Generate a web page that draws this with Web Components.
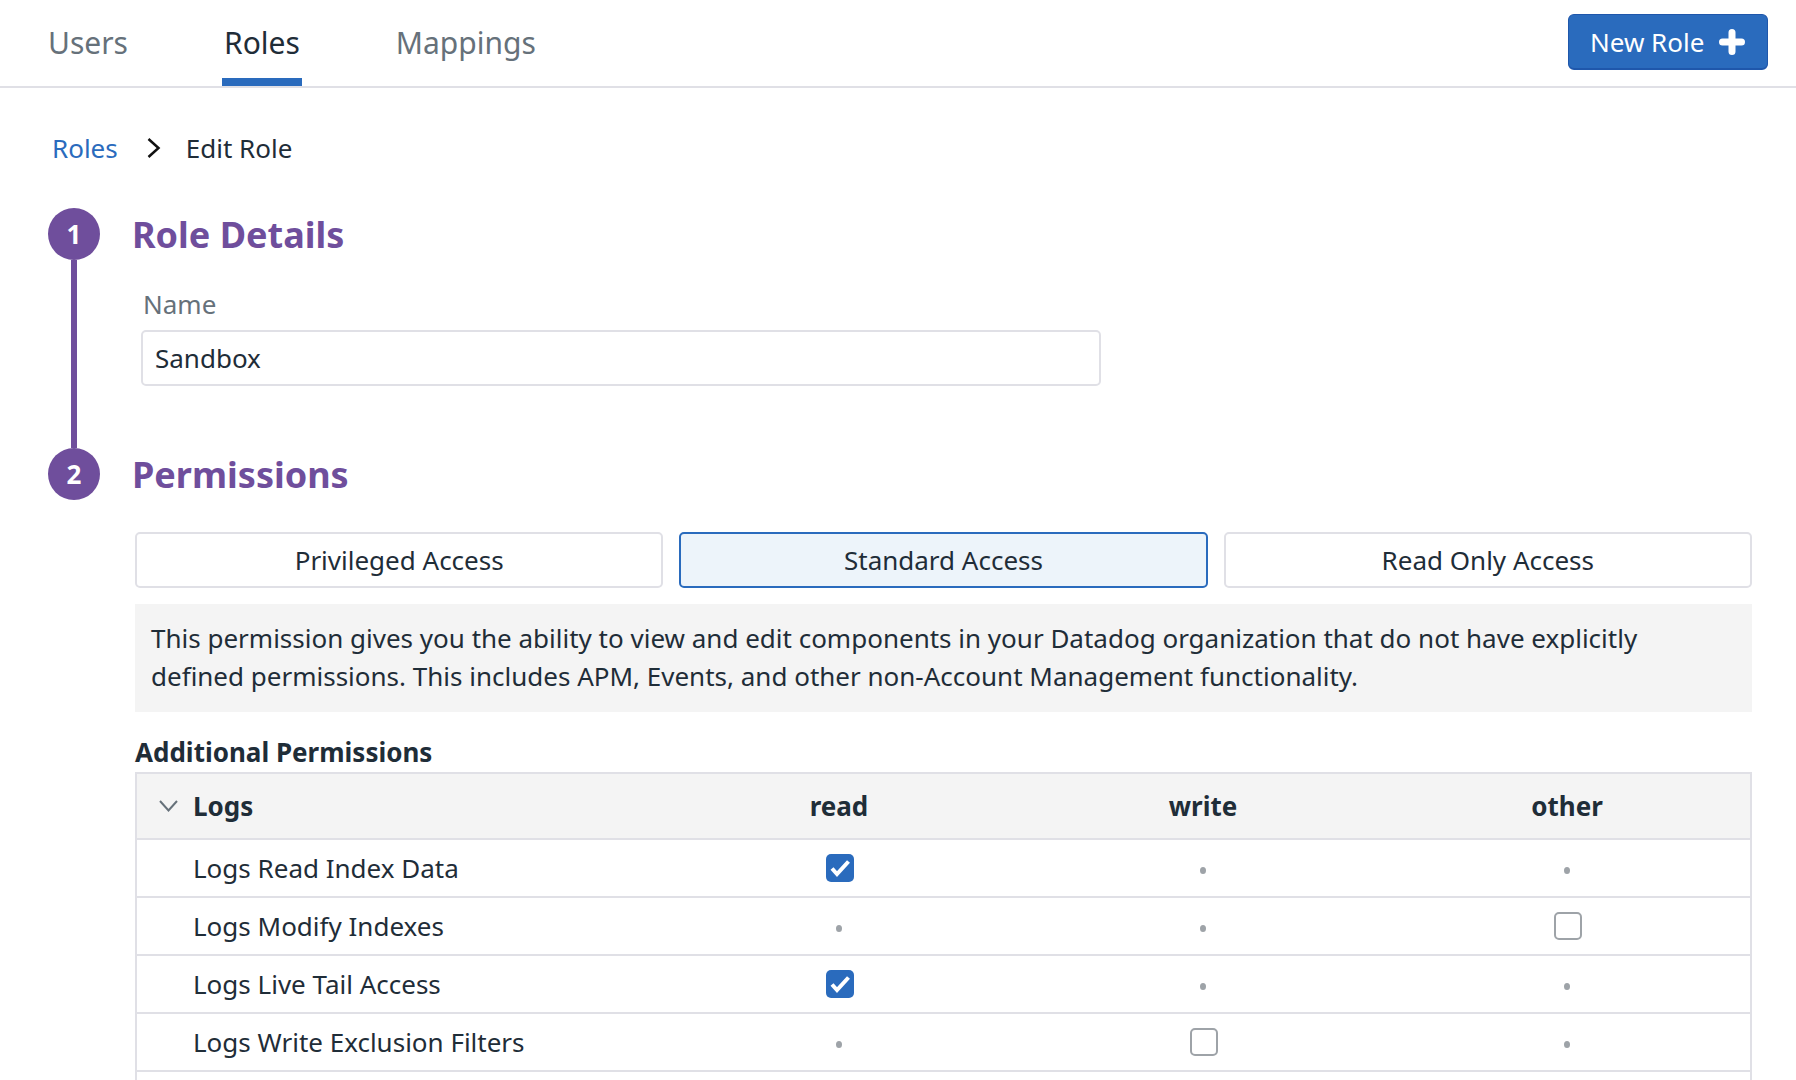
<!DOCTYPE html>
<html>
<head>
<meta charset="utf-8">
<title>Edit Role</title>
<style>
  html, body {
    margin: 0;
    height: 100%;
    overflow: hidden;
    background: #fff;
    font-family: "Noto Sans", sans-serif;
    color: #1f2d38;
  }
</style>
</head>
<body>
<role-tabs>
  <tab-item>Users</tab-item>
  <tab-item active>Roles</tab-item>
  <tab-item>Mappings</tab-item>
  <new-button slot="action">New Role</new-button>
</role-tabs>

<bread-crumb current="Edit Role">Roles</bread-crumb>

<role-step number="1" title="Role Details" line>
  <name-field label="Name" value="Sandbox"></name-field>
</role-step>

<role-step number="2" title="Permissions">
  <access-picker>
    <access-option>Privileged Access</access-option>
    <access-option selected>Standard Access</access-option>
    <access-option>Read Only Access</access-option>
  </access-picker>
  <info-box>This permission gives you the ability to view and edit components in your Datadog organization that do not have explicitly defined permissions. This includes APM, Events, and other non-Account Management functionality.</info-box>
  <perm-table title="Additional Permissions" group="Logs">
    <perm-row label="Logs Read Index Data" read="checked"></perm-row>
    <perm-row label="Logs Modify Indexes" other="empty"></perm-row>
    <perm-row label="Logs Live Tail Access" read="checked"></perm-row>
    <perm-row label="Logs Write Exclusion Filters" write="empty"></perm-row>
    <perm-row></perm-row>
  </perm-table>
</role-step>

<script>
class RoleTabs extends HTMLElement {
  constructor() {
    super();
    this.attachShadow({ mode: "open" }).innerHTML = `
      <style>
        :host {
          display: flex;
          justify-content: space-between;
          height: 88px;
          box-sizing: border-box;
          border-bottom: 2px solid #e0e0e6;
          padding: 0 28px 0 46px;
        }
        .tabs { display: flex; gap: 92px; }
        .action { display: flex; padding-top: 14px; }
      </style>
      <div class="tabs"><slot></slot></div>
      <div class="action"><slot name="action"></slot></div>`;
  }
}

class TabItem extends HTMLElement {
  constructor() {
    super();
    this.attachShadow({ mode: "open" }).innerHTML = `
      <style>
        :host {
          display: block;
          height: 86px;
          box-sizing: border-box;
          padding: 0 2px;
          font-size: 30px;
          line-height: 86px;
          color: #66717a;
          border-bottom: 8px solid transparent;
        }
        :host([active]) {
          color: #1f2d38;
          border-bottom-color: #2a6bbd;
        }
      </style>
      <slot></slot>`;
  }
}

class NewButton extends HTMLElement {
  constructor() {
    super();
    this.attachShadow({ mode: "open" }).innerHTML = `
      <style>
        :host {
          display: flex;
          align-items: center;
          justify-content: space-between;
          width: 200px;
          height: 56px;
          box-sizing: border-box;
          padding: 0 22px 0 21px;
          background: #2a6bbd;
          border: 1px solid #1f57ab;
          border-bottom-width: 2px;
          border-radius: 6px;
          color: #fff;
          font-size: 26px;
        }
        svg { width: 26px; height: 26px; }
      </style>
      <slot></slot>
      <svg viewBox="0 0 26 26"><path d="M13 3.500v19M3.500 13h19" stroke="#fff" stroke-width="7" stroke-linecap="round" fill="none"/></svg>`;
  }
}

class BreadCrumb extends HTMLElement {
  constructor() {
    super();
    this.attachShadow({ mode: "open" }).innerHTML = `
      <style>
        :host {
          display: flex;
          align-items: center;
          height: 120px;
          padding-left: 52px;
          font-size: 26px;
        }
        .link { color: #2a6bbd; }
        svg { width: 14px; height: 20px; margin: 0 25px 0 29px; }
      </style>
      <span class="link"><slot></slot></span>
      <svg viewBox="0 0 14 20"><path d="M1.500 1l10 9-10 9" stroke="#111" stroke-width="2.500" fill="none"/></svg>
      <span class="current"></span>`;
    this.shadowRoot.querySelector(".current").textContent = this.getAttribute("current");
  }
}

class RoleStep extends HTMLElement {
  constructor() {
    super();
    this.attachShadow({ mode: "open" }).innerHTML = `
      <style>
        :host {
          display: grid;
          grid-template-columns: 52px 1fr;
          column-gap: 33px;
          padding: 0 44px 0 48px;
        }
        .rail { display: flex; flex-direction: column; align-items: center; }
        .num {
          width: 52px;
          height: 52px;
          flex: none;
          border-radius: 50%;
          background: #6f4e9c;
          color: #fff;
          font-size: 26px;
          font-weight: 700;
          line-height: 52px;
          text-align: center;
        }
        .line { flex: 1; width: 6px; background: #6f4e9c; }
        h2 {
          margin: 0 0 0 -1px;
          height: 52px;
          color: #6f4e9c;
          font-size: 36px;
          font-weight: 700;
          line-height: 54px;
        }
      </style>
      <div class="rail"><div class="num"></div></div>
      <div><h2></h2><slot></slot></div>`;
    const root = this.shadowRoot;
    root.querySelector(".num").textContent = this.getAttribute("number");
    root.querySelector("h2").textContent = this.getAttribute("title");
    if (this.hasAttribute("line")) {
      const line = document.createElement("div");
      line.className = "line";
      root.querySelector(".rail").append(line);
    }
  }
}

class NameField extends HTMLElement {
  constructor() {
    super();
    this.attachShadow({ mode: "open" }).innerHTML = `
      <style>
        :host { display: block; padding: 26px 0 62px 8px; }
        label {
          display: block;
          height: 44px;
          padding-left: 2px;
          color: #66717a;
          font-size: 26px;
          line-height: 36px;
        }
        .input {
          width: 960px;
          height: 56px;
          box-sizing: border-box;
          padding-left: 12px;
          border: 2px solid #e0e0e6;
          border-radius: 5px;
          font-size: 26px;
          line-height: 52px;
        }
      </style>
      <label></label>
      <div class="input"></div>`;
    this.shadowRoot.querySelector("label").textContent = this.getAttribute("label");
    this.shadowRoot.querySelector(".input").textContent = this.getAttribute("value");
  }
}

class AccessPicker extends HTMLElement {
  constructor() {
    super();
    this.attachShadow({ mode: "open" }).innerHTML = `
      <style>
        :host {
          display: grid;
          grid-template-columns: repeat(3, 1fr);
          column-gap: 16px;
          margin: 32px 0 16px 2px;
        }
      </style>
      <slot></slot>`;
  }
}

class AccessOption extends HTMLElement {
  constructor() {
    super();
    this.attachShadow({ mode: "open" }).innerHTML = `
      <style>
        :host {
          display: block;
          height: 56px;
          box-sizing: border-box;
          border: 2px solid #e0e0e6;
          border-radius: 5px;
          font-size: 26px;
          line-height: 52px;
          text-align: center;
        }
        :host([selected]) {
          background: #edf4fa;
          border-color: #2a6bbd;
        }
      </style>
      <slot></slot>`;
  }
}

class InfoBox extends HTMLElement {
  constructor() {
    super();
    this.attachShadow({ mode: "open" }).innerHTML = `
      <style>
        :host {
          display: block;
          margin-left: 2px;
          padding: 15px 16px 17px;
          background: #f4f4f4;
          font-size: 26px;
          line-height: 38px;
        }
      </style>
      <slot></slot>`;
  }
}

class PermTable extends HTMLElement {
  constructor() {
    super();
    this.attachShadow({ mode: "open" }).innerHTML = `
      <style>
        :host { display: block; margin-left: 2px; }
        h3 {
          margin: 0;
          height: 60px;
          font-size: 26px;
          font-weight: 700;
          line-height: 80px;
        }
        .table { border: 2px solid #e0e0e6; border-bottom: 0; }
        .head {
          display: grid;
          grid-template-columns: 1fr 364px 364px 364px;
          height: 64px;
          padding-right: 1px;
          background: #f4f4f4;
          border-bottom: 2px solid #e0e0e6;
          font-size: 26px;
          font-weight: 700;
          line-height: 64px;
          text-align: center;
        }
        .group {
          display: flex;
          align-items: center;
          gap: 15px;
          padding-left: 22px;
        }
        svg { width: 19px; height: 12px; }
      </style>
      <h3></h3>
      <div class="table">
        <div class="head">
          <div class="group">
            <svg viewBox="0 0 19 12"><path d="M1 1l8.500 9.500L18 1" stroke="#66717a" stroke-width="2" fill="none"/></svg>
            <span class="name"></span>
          </div>
          <div>read</div><div>write</div><div>other</div>
        </div>
        <slot></slot>
      </div>`;
    this.shadowRoot.querySelector("h3").textContent = this.getAttribute("title");
    this.shadowRoot.querySelector(".name").textContent = this.getAttribute("group");
  }
}

class PermRow extends HTMLElement {
  constructor() {
    super();
    this.attachShadow({ mode: "open" }).innerHTML = `
      <style>
        :host {
          display: grid;
          grid-template-columns: 1fr 364px 364px 364px;
          align-items: center;
          height: 58px;
          box-sizing: border-box;
          padding-right: 1px;
          border-bottom: 2px solid #e0e0e6;
          font-size: 26px;
        }
        .label { padding-left: 56px; margin-top: -1px; }
        .cell { display: flex; justify-content: center; }
      </style>
      <div class="label"></div>
      <div class="cell" data-col="read"></div>
      <div class="cell" data-col="write"></div>
      <div class="cell" data-col="other"></div>`;
    this.shadowRoot.querySelector(".label").textContent = this.getAttribute("label") || "";
    if (this.hasAttribute("label")) {
      this.shadowRoot.querySelectorAll(".cell").forEach((cell) => {
        const mark = document.createElement("perm-mark");
        const state = this.getAttribute(cell.dataset.col);
        if (state) mark.setAttribute("state", state);
        cell.append(mark);
      });
    }
  }
}

class PermMark extends HTMLElement {
  constructor() {
    super();
    this.attachShadow({ mode: "open" });
  }

  connectedCallback() {
    const state = this.getAttribute("state");
    if (state === "checked") {
      this.shadowRoot.innerHTML = `
        <style>
          :host { display: block; height: 28px; margin-left: 2px; }
          svg { display: block; width: 28px; height: 28px; }
        </style>
        <svg viewBox="0 0 28 28">
          <rect width="28" height="28" rx="5" fill="#2a6bbd"/>
          <path d="M6 14.500l5 5.500L22.500 7.500" stroke="#fff" stroke-width="4" fill="none"/>
        </svg>`;
    } else if (state === "empty") {
      this.shadowRoot.innerHTML = `
        <style>
          :host {
            display: block;
            width: 28px;
            height: 28px;
            margin-left: 2px;
            box-sizing: border-box;
            border: 2px solid #9ea3a8;
            border-radius: 5px;
          }
        </style>`;
    } else {
      this.shadowRoot.innerHTML = `
        <style>
          :host {
            display: block;
            width: 6px;
            height: 7px;
            margin: 4px 0 0 0;
            border-radius: 50%;
            background: #9ea3a8;
          }
        </style>`;
    }
  }
}

customElements.define("role-tabs", RoleTabs);
customElements.define("tab-item", TabItem);
customElements.define("new-button", NewButton);
customElements.define("bread-crumb", BreadCrumb);
customElements.define("role-step", RoleStep);
customElements.define("name-field", NameField);
customElements.define("access-picker", AccessPicker);
customElements.define("access-option", AccessOption);
customElements.define("info-box", InfoBox);
customElements.define("perm-table", PermTable);
customElements.define("perm-row", PermRow);
customElements.define("perm-mark", PermMark);
</script>
</body>
</html>
